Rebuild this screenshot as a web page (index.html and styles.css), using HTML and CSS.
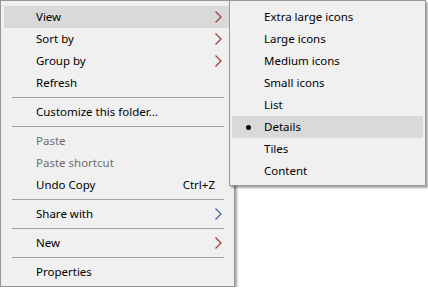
FILE: index.html
```html
<!DOCTYPE html>
<html lang="en">
<head>
    <meta charset="UTF-8">
    <title>Context menu</title>
    <link rel="stylesheet" href="styles.css">
</head>
<body>
    <div class="menu-wrap">
        <ul class="menu">
            <li class="item active">View
                <svg class="arrow red" width="7" height="12" viewBox="0 0 7 12"><polyline points="0.5,0.5 6,6 0.5,11.5" /></svg>
            </li>
            <li class="item">Sort by
                <svg class="arrow red" width="7" height="12" viewBox="0 0 7 12"><polyline points="0.5,0.5 6,6 0.5,11.5" /></svg>
            </li>
            <li class="item">Group by
                <svg class="arrow red" width="7" height="12" viewBox="0 0 7 12"><polyline points="0.5,0.5 6,6 0.5,11.5" /></svg>
            </li>
            <li class="item">Refresh</li>
            <li class="sep"></li>
            <li class="item">Customize this folder...</li>
            <li class="sep"></li>
            <li class="item disabled">Paste</li>
            <li class="item disabled">Paste shortcut</li>
            <li class="item">Undo Copy <span class="shortcut">Ctrl+Z</span></li>
            <li class="sep"></li>
            <li class="item">Share with
                <svg class="arrow blue" width="7" height="12" viewBox="0 0 7 12"><polyline points="0.5,0.5 6,6 0.5,11.5" /></svg>
            </li>
            <li class="sep"></li>
            <li class="item">New
                <svg class="arrow red" width="7" height="12" viewBox="0 0 7 12"><polyline points="0.5,0.5 6,6 0.5,11.5" /></svg>
            </li>
            <li class="sep"></li>
            <li class="item">Properties</li>
        </ul>

        <ul class="menu submenu">
            <li class="item">Extra large icons</li>
            <li class="item">Large icons</li>
            <li class="item">Medium icons</li>
            <li class="item">Small icons</li>
            <li class="item">List</li>
            <li class="item active"><span class="bullet"></span>Details</li>
            <li class="item">Tiles</li>
            <li class="item">Content</li>
        </ul>
    </div>
</body>
</html>
```

FILE: styles.css
```css
body {
    margin: 0;
    background-color: #fff;
    font-family: 'Noto Sans', sans-serif;
    font-size: 11.5px;
    color: #000;
}
.menu-wrap {
    position: relative;
}
.menu {
    list-style: none;
    margin: 0;
    width: 235px;
    box-sizing: border-box;
    padding: 5px 4px 3px 3px;
    background-color: #f0f0f0;
    border: 1px solid #979797;
    box-shadow: 2px 2px 2px rgba(0, 0, 0, 0.35);
}
.item {
    position: relative;
    display: flex;
    align-items: center;
    height: 22px;
    padding-left: 32px;
    padding-right: 8px;
    padding-bottom: 1px;
    box-sizing: border-box;
}
.item.active {
    background-color: #d9d9d9;
}
.item.disabled {
    color: #6d6d6d;
}
.shortcut {
    margin-left: auto;
    padding-right: 7px;
}
.arrow {
    margin-left: auto;
    margin-top: 1px;
    fill: none;
    stroke-width: 1.2;
}
.arrow.red {
    stroke: #9c3b3b;
}
.arrow.blue {
    stroke: #3a63a8;
}
.sep {
    height: 7px;
    display: flex;
    align-items: center;
    padding: 0 6px 0 8px;
}
.sep::before {
    content: "";
    flex: 1;
    border-top: 1px solid #a0a0a0;
}
.submenu {
    position: absolute;
    top: 0;
    left: 229px;
    width: 197px;
    padding: 5px 2px 3px 2px;
}
.submenu .item {
    padding-left: 32px;
}
.bullet {
    position: absolute;
    left: 14px;
    top: 9px;
    width: 5px;
    height: 5px;
    border-radius: 50%;
    background-color: #000;
}
```
